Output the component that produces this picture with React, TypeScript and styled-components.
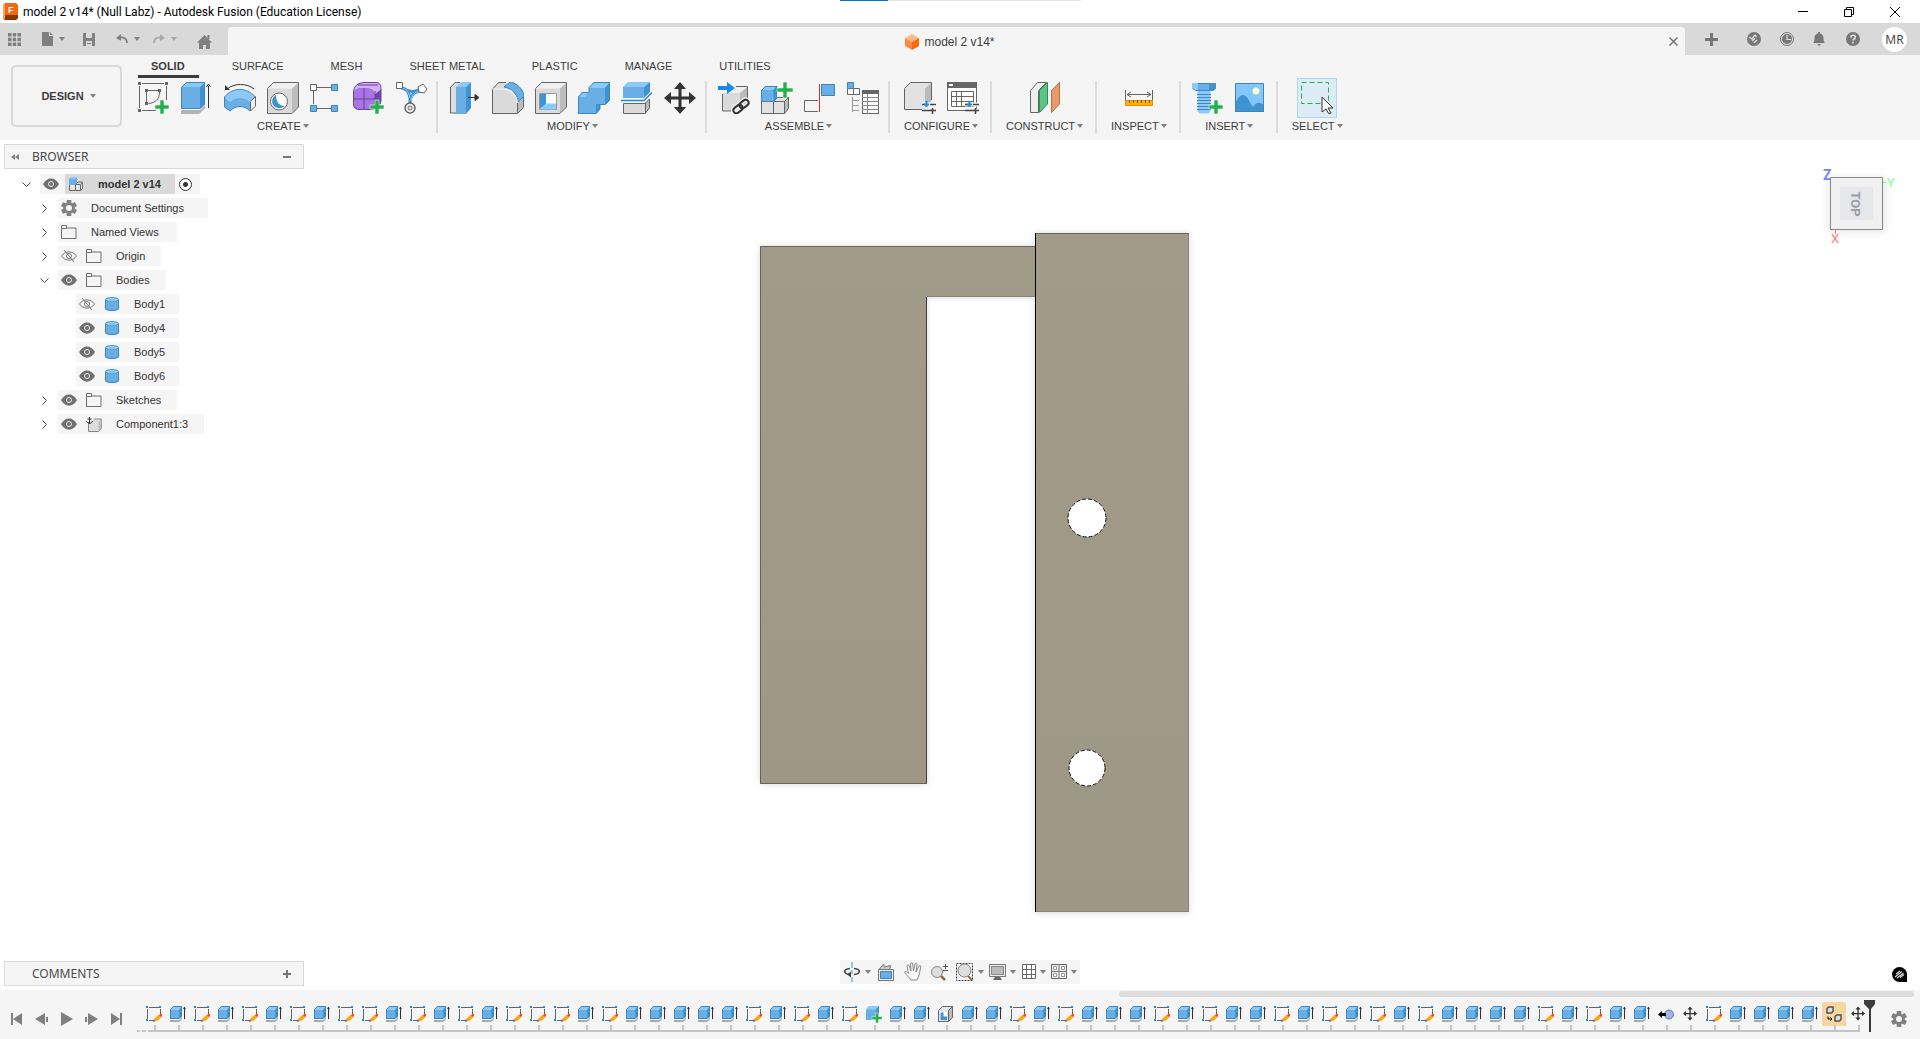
import React from "react";
import styled, { createGlobalStyle } from "styled-components";

const GlobalStyle = createGlobalStyle`
  * { box-sizing: border-box; }
  body { margin: 0; background: #fff; color: #3c3c3c; font: 11px/16px "Liberation Sans", Arial, sans-serif; overflow: hidden; }
  button { font: inherit; color: inherit; background: none; border: 0; padding: 0; margin: 0; }
  svg { display: block; flex: none; }
  ul { list-style: none; margin: 0; padding: 0; }
`;

const uiFont = `"Noto Sans", "Open Sans", sans-serif`;

/* ---------- shell ---------- */

const Shell = styled.div`
  min-height: 100vh;
  display: flex;
  flex-direction: column;
`;

const TitleBar = styled.header`
  height: 23px;
  display: flex;
  align-items: center;
  padding: 0 2px 0 3px;
  background: #fff;
  color: #000;
  position: relative;
`;

const WindowTitle = styled.h1`
  margin: 0 auto 0 5px;
  font: 400 12px/20px Roboto, sans-serif;
`;

const LoadStrip = styled.div`
  position: absolute;
  top: 0;
  left: 50%;
  width: 241px;
  height: 1px;
  margin-left: -120px;
  background: linear-gradient(to right, #0078d7 48px, #e5e5e5 48px);
`;

const WindowButton = styled.button`
  width: 46px;
  height: 20px;
  display: grid;
  place-items: center;
`;

const AppBar = styled.div`
  height: 32px;
  display: flex;
  background: #d9d9d9;
  color: #808080;
`;

const QuickAccess = styled.div`
  width: 228px;
  display: flex;
  align-items: center;
  padding-left: 8px;
`;

const ToolButton = styled.button<{ $w: number; $dim?: boolean }>`
  width: ${(p) => p.$w}px;
  height: 32px;
  display: flex;
  align-items: center;
  gap: 6px;
  color: ${(p) => (p.$dim ? "#a8a8a8" : "#808080")};
`;

const DocumentTab = styled.div`
  flex: 1;
  margin-top: 4px;
  display: flex;
  align-items: center;
  padding: 1px 5px 0 6px;
  background: #f5f5f5;
  border-radius: 4px 4px 0 0;
`;

const DocumentName = styled.div`
  flex: 1;
  display: flex;
  justify-content: center;
  align-items: center;
  gap: 5px;
  font-size: 12px;
  color: #3c3c3c;
`;

const AppActions = styled.div`
  width: 235px;
  display: flex;
  align-items: center;
  padding: 0 13px 0 19px;
`;

const ActionButton = styled.button<{ $gap: number }>`
  width: 14px;
  height: 24px;
  display: grid;
  place-items: center;
  margin-right: ${(p) => p.$gap}px;
`;

const Avatar = styled.button`
  width: 25px;
  height: 25px;
  margin-left: auto;
  border-radius: 50%;
  background: #fff;
  color: #4a4a4a;
  font: 400 12px/25px ${uiFont};
`;

/* ---------- ribbon ---------- */

const Ribbon = styled.section`
  height: 85px;
  display: flex;
  background: #f5f5f5;
`;

const WorkspaceButton = styled.button`
  width: 111px;
  height: 62px;
  margin: 10px 16px 0 11px;
  padding-left: 4px;
  display: flex;
  align-items: center;
  justify-content: center;
  gap: 6px;
  border: 2px solid #d9d9d9;
  border-radius: 5px;
  font-weight: 700;
`;

const RibbonBody = styled.div`
  flex: 1;
`;

const RibbonTabs = styled.nav`
  display: flex;
  height: 26px;
  align-items: flex-start;
`;

const RibbonTab = styled.button<{ $active?: boolean }>`
  height: 23px;
  padding: 3px 14px 1px 13px;
  margin-right: 20px;
  font-weight: ${(p) => (p.$active ? 700 : 400)};
  border-bottom: 3px solid ${(p) => (p.$active ? "#3c3c3c" : "transparent")};
`;

const Groups = styled.div`
  display: flex;
`;

const Group = styled.section`
  display: flex;
  flex-direction: column;
  align-items: center;
  height: 52px;
  padding: 1px 9px 0 11px;
  border-right: 2px solid #dcdcdc;
  &:first-child { padding: 1px 8px 0 0; }
  &:last-child { border-right: 0; }
`;

const GroupTools = styled.div`
  display: flex;
  gap: 11px;
`;

const GroupTool = styled.button<{ $selected?: boolean }>`
  width: 32px;
  height: 32px;
  box-shadow: ${(p) => (p.$selected ? "0 0 0 3px #dcebf4, 0 0 0 4px #a9d8f0" : "none")};
  background: ${(p) => (p.$selected ? "#dcebf4" : "none")};
`;

const GroupLabel = styled.button`
  display: flex;
  align-items: center;
  gap: 2px;
  padding: 4px 3px 0;
`;

/* ---------- viewport ---------- */

const Viewport = styled.main`
  flex: 1;
  display: flex;
  position: relative;
  background: #fff;
`;

const Scene = styled.svg`
  position: absolute;
  inset: 0;
  width: 100%;
  height: 100%;
`;

const SidePanels = styled.aside`
  width: 300px;
  margin: 4px 0 4px 4px;
  display: flex;
  flex-direction: column;
  justify-content: space-between;
  position: relative;
`;

const PanelHeader = styled.div`
  height: 25px;
  display: flex;
  align-items: center;
  padding: 0 12px 0 6px;
  background: #f5f5f5;
  border: 1px solid #dadada;
  color: #808080;
`;

const PanelTitle = styled.h2`
  flex: 1;
  margin: 0 0 0 13px;
  color: #4a4a4a;
  font: 400 12px/20px ${uiFont};
`;

const PanelButton = styled.button`
  width: 8px;
  height: 20px;
  display: grid;
  place-items: center;
`;

const Tree = styled.ul`
  padding-top: 5px;
`;

const TreeRow = styled.li<{ $indent: number }>`
  height: 20px;
  margin-bottom: 4px;
  display: flex;
  align-items: center;
  padding-left: ${(p) => p.$indent}px;
  color: #333;
`;

const Expander = styled.button`
  width: 12px;
  height: 20px;
  margin-right: 8px;
  display: grid;
  place-items: center;
`;

const RowBody = styled.div<{ $pad: number }>`
  height: 20px;
  display: flex;
  align-items: center;
  padding-right: ${(p) => p.$pad}px;
  background: #f5f5f5;
`;

const RowIcon = styled.span<{ $w: number }>`
  width: ${(p) => p.$w}px;
  height: 20px;
  display: grid;
  place-items: center;
`;

const RowLabel = styled.button<{ $gap: number }>`
  margin-left: ${(p) => p.$gap}px;
`;

const RootName = styled.button`
  height: 20px;
  width: 110px;
  margin-left: 3px;
  display: flex;
  align-items: center;
  gap: 15px;
  padding-left: 4px;
  background: #d9d9d9;
  font-weight: 700;
`;

const ActivateRadio = styled.input`
  appearance: none;
  width: 13px;
  height: 13px;
  margin: 0 8px 0 4px;
  border: 1px solid #333;
  border-radius: 50%;
  background: radial-gradient(circle, #333 0 2px, #fff 3px);
`;

const ViewportCenter = styled.div`
  flex: 1;
  display: flex;
  flex-direction: column;
  align-items: center;
  justify-content: flex-end;
  padding-bottom: 6px;
  position: relative;
`;

const NavBar = styled.div`
  height: 24px;
  width: 240px;
  display: flex;
  align-items: center;
  justify-content: space-between;
  padding: 0 3px 1px;
  background: #f5f5f5;
`;

const NavButton = styled.button<{ $plain?: boolean }>`
  height: 22px;
  display: flex;
  align-items: center;
  gap: 4px;
  padding: 0 ${(p) => (p.$plain ? 2 : 0)}px;
`;

const ViewportRight = styled.div`
  width: 304px;
  display: flex;
  flex-direction: column;
  align-items: flex-end;
  justify-content: space-between;
  padding: 24px 13px 8px 0;
  position: relative;
`;

const CubeButton = styled.button`
  margin-right: 9px;
`;

const AssistantButton = styled.button`
  margin: 0 0 0 auto;
`;

/* ---------- timeline ---------- */

const Timeline = styled.footer`
  height: 49px;
  display: flex;
  background: #f5f5f5;
  color: #808080;
  position: relative;
`;

const ScrollThumb = styled.div`
  position: absolute;
  top: 1px;
  right: 6px;
  width: 795px;
  height: 6px;
  border-radius: 3px;
  background: #dddddd;
`;

const Playback = styled.div`
  display: flex;
  gap: 8px;
  width: 137px;
  padding: 9px 0 0 8px;
`;

const PlaybackButton = styled.button`
  width: 17px;
  height: 40px;
  display: grid;
  place-items: center;
`;

const History = styled.div`
  padding-top: 12px;
`;

const Steps = styled.div`
  display: flex;
  padding-left: 5px;
`;

const Step = styled.button<{ $selected?: boolean }>`
  width: 24px;
  height: 28px;
  padding: 4px 4px 0;
  background: linear-gradient(#c5c5c5, #c5c5c5) 12px 23px / 2px 5px no-repeat,
    linear-gradient(${(p) => (p.$selected ? "#f8d5a2, #f8d5a2" : "transparent, transparent")}) 0 0 / 24px 24px no-repeat;
  border-radius: 2px;
`;

const Rail = styled.div`
  display: flex;
  gap: 2px;
  margin-right: 10px;
`;

const RailPart = styled.span<{ $w?: number }>`
  height: 2px;
  background: #c5c5c5;
  ${(p) => (p.$w ? `width: ${p.$w}px;` : "flex: 1;")}
`;

const Marker = styled.div`
  margin: 10px 0 0 -6px;
  position: relative;
`;

const SettingsButton = styled.button`
  margin: 9px 12px 0 auto;
  width: 18px;
  height: 40px;
  display: grid;
  place-items: center;
`;

/* ---------- shared icons ---------- */

const B = "#69afe5";
const BL = "#8bc9fb";
const BD = "#3f93d1";
const G = "#666";

const Caret = () => (
  <svg width="6" height="4" viewBox="0 0 6 4"><path d="M0 0h6L3 4z" fill="#808080" /></svg>
);

const Plus = ({ x, y }: { x: number; y: number }) => (
  <path d={`M${x + 5} ${y}h4v5h5v4h-5v5h-4v-5h-5v-4h5z`} fill="#23b14d" stroke="#f5f5f5" strokeWidth=".6" />
);

const moveShape = (
  <path d="M16 0l6 7h-4.500v7.500H25V10l7 6-7 6v-4.500h-7.500V25H22l-6 7-6-7h4.500v-7.500H7V22l-7-6 7-6v4.500h7.500V7H10z" fill="#333" />
);

const Cube = () => (
  <>
    <path d="M.5 6.500L6 .5h25L25 6.500z" fill="#f0f0f0" />
    <path d="M.5 6.500H25v25H.5z" fill="#dadada" />
    <path d="M25 6.500l6.500-6V25L25 31.500z" fill="#bdbdbd" />
    <path d="M.5 6.500L6.500.5h25V25L25 31.500H.5z" fill="none" stroke={G} />
  </>
);

const ribbonArt: Record<string, React.ReactNode> = {
  sketch: (
    <>
      <path d="M1.500 4v22M4 1.500h22M28.500 4v14M4 28.500h14" stroke={G} fill="none" />
      <path d="M0 0h3v3H0zM27 0h3v3h-3zM0 27h3v3H0zM7 7h3v3H7zM20 7h3v3h-3zM7 20h3v3H7z" fill={G} />
      <path d="M8.500 10v10M10 8.500h10M21.500 10c0 7-4 11-11 11.500" stroke={G} fill="none" />
      <Plus x={17} y={18} />
    </>
  ),
  extrude: (
    <>
      <path d="M0 28h19l5-5v3l-6 6H0z" fill="#b3b3b3" />
      <path d="M0 5L5 0h19l-5 5z" fill={BL} /><path d="M0 5h19v22H0z" fill={B} /><path d="M19 5l5-5v22l-5 5z" fill={BD} />
      <path d="M.5 5.500L5.500.5h18V22L19 26.500H.5z" fill="none" stroke="#3b86bd" />
      <path d="M27.500 4v22M25.500 5l2-3 2 3" stroke="#333" fill="none" />
    </>
  ),
  revolve: (
    <>
      <path d="M3 7c7-6 20-6 27 0" stroke="#333" fill="none" /><path d="M1 3v5h5z" fill="#333" />
      <path d="M.5 15C9 5 22 5 31.500 15L26 20c-6-6-14-6-20 0z" fill={BL} />
      <path d="M.5 15L6 20v9L.5 25zM6 20c6-6 14-6 20 0v9c-6-6-14-6-20 0z" fill={B} />
      <path d="M.5 15C9 5 22 5 31 14.500M.5 15v10L6 29c6-6 14-6 20 0" stroke="#3b86bd" fill="none" />
      <path d="M26.500 19.500l5-5V24l-5 5z" fill="#f5f5f5" stroke={G} />
    </>
  ),
  hole: (
    <>
      <Cube /><circle cx="12" cy="19.500" r="8.500" fill="#fff" stroke={G} />
      <path d="M9 13c-4 2-5 7-2.500 10.500 3 3.500 8 3.500 11 .5-5 0-8.500-4-8.500-11z" fill={BD} />
    </>
  ),
  pattern: (
    <>
      <path d="M7 5.500h15M3.500 9v13M7 26.500h15" stroke={G} />
      <path d="M.5 2.500h6v6h-6z" fill="#fff" stroke={G} />
      <path d="M21.500 2.500h6v6h-6zM.5 23.500h6v6h-6zM21.500 23.500h6v6h-6z" fill={B} stroke="#3b86bd" />
    </>
  ),
  form: (
    <>
      <rect x="0" y="6" width="22" height="22" rx="6" fill="#a974e6" /><path d="M22 26c3-1 6-4 6-8V7l-6 5z" fill="#7544ad" />
      <path d="M1 9C2 3 7 0 12 0h11c4 0 5 3 5 7l-6 5c0-4-2-6-6-6H6C3 6 1 8 1 9z" fill="#d4aef7" />
      <path d="M.5 12C0 4 5 .5 12 .5h11c3 0 5 2 5 5V18c0 5-4 9-10 9.500H7c-4 0-6.500-2-6.500-6zM11 6v22M0 17h22M5 3h20M22 9v17" fill="none" stroke="#68409a" />
      <Plus x={17} y={18} />
    </>
  ),
  pipe: (
    <>
      <path d="M5 6c5 0 8 4 9 10v6M26 9c-7 0-10 3-12 9M8 7c5 3 10 3 15 1" stroke={BD} strokeWidth="3" fill="none" />
      <path d="M5 6c5 0 8 4 9 10M26 9c-7 0-9 3-11 9" stroke={BL} fill="none" />
      <circle cx="14" cy="26" r="5" fill="#eee" stroke={G} strokeWidth="1.500" /><circle cx="14" cy="26" r="2" fill="none" stroke={G} />
      <path d="M.5.5h6v6h-6zM22 5l5-3 4 5-3 4-5-1z" fill="#fff" stroke={G} />
    </>
  ),
  press: (
    <>
      <path d="M1 5l5-5h4v31H1z" fill="#ddd" /><path d="M1.500 5.500L6 .5h5M1.500 5v26H7" fill="none" stroke={G} />
      <path d="M7 5l5-5h10l-5 5z" fill={BL} /><path d="M7 5h10v27H7z" fill={B} /><path d="M17 5l5-5v26l-5 6z" fill={BD} />
      <path d="M19 15.500h10M26 12.500l4 3-4 3z" stroke="#333" fill="#333" />
    </>
  ),
  fillet: (
    <>
      <path d="M.5 7l6-6.500H14L25 19v12.500H.5z" fill="#dadada" /><path d="M25 20l6.500-5v10L25 31.500z" fill="#bbb" />
      <path d="M.5 31.500V7l6-6.500H14M25.500 19v12.500H.500M25.500 31.500l6-6V15" fill="none" stroke={G} />
      <path d="M12 5l6-5c7 1 13 7 14 14l-6 6c-1-8-6-14-14-15z" fill={B} stroke="#3b86bd" />
      <path d="M.5 7h9c9 0 16 7 16 14" fill="none" stroke="#f5f5f5" />
    </>
  ),
  shell: (
    <>
      <Cube /><path d="M4.500 11.500h17v16h-17z" fill="#fff" stroke="#999" /><path d="M5 12h6v10l-6 5z" fill={BD} /><path d="M5 27.500l6-6h10v6z" fill={BL} />
    </>
  ),
  combine: (
    <>
      <path d="M0 15l4-5h7V6l5-6h16v18l-5 5h-5v4l-4 5H0z" fill={B} />
      <path d="M11 6l5-6h16l-5 6zM0 15l4-5h7l-4 5z" fill={BL} /><path d="M27 6l5-6v18l-5 5h-5v4l-4 5V22h9z" fill={BD} />
      <path d="M.5 15l4-4.500H11V5.500L16 .5h15.500V18L27 22.500h-5V27l-4 4.500H.5z" fill="none" stroke="#3b86bd" />
    </>
  ),
  split: (
    <>
      <path d="M2 5l5-5h22l-6 5z" fill={BL} /><path d="M2 5h21v11H2z" fill={B} /><path d="M23 5l6-5v10l-6 6z" fill={BD} />
      <path d="M0 18.500h23l8-8" stroke="#1a8ae5" fill="none" strokeWidth="1.500" />
      <path d="M2.500 21.500h22v10h-22z" fill="#dadada" stroke={G} /><path d="M24.500 21l4-4v9l-4 5z" fill="#bbb" stroke={G} />
    </>
  ),
  move: moveShape,
  insertComp: (
    <>
      <path d="M5 11l6-6h18l-7 6z" fill="#eee" /><path d="M5 11h17v18H5z" fill="#dadada" /><path d="M22 11l7-6v17l-7 7z" fill="#bbb" />
      <path d="M4.500 12v17H18M18 4.500h11.500V18" fill="none" stroke={G} />
      <path d="M0 4h9V0l8 6-8 6V8H0z" fill="#1a8ae5" />
      <g fill="none" stroke="#f5f5f5" strokeWidth="5"><rect x="15" y="24" width="10" height="6" rx="3" transform="rotate(-38 20 27)" /><rect x="21" y="19" width="10" height="6" rx="3" transform="rotate(-38 26 22)" /></g>
      <g fill="none" stroke="#333" strokeWidth="2"><rect x="15" y="24" width="10" height="6" rx="3" transform="rotate(-38 20 27)" /><rect x="21" y="19" width="10" height="6" rx="3" transform="rotate(-38 26 22)" /></g>
    </>
  ),
  newComp: (
    <>
      <path d="M.5 19.500h12v12H.5zM12.500 19.500h11v12h-11zM12.500 19.500l4-4h11l-4 4z" fill="#e2e2e2" stroke={G} /><path d="M23.500 19.500l4-4v11l-4 5z" fill="#bbb" stroke={G} />
      <path d="M0 8l4-4h13l-3 4z" fill={BL} /><path d="M0 8h13v12H0z" fill={B} /><path d="M12 8l4-4v11l-3 5z" fill={BD} />
      <path d="M.5 8.500l4-4h11V16l-3 3.500H.5z" fill="none" stroke="#3b86bd" />
      <path d="M22 0h4v6h6v4h-6v6h-4v-6h-6V6h6z" fill="#23b14d" stroke="#f5f5f5" strokeWidth=".6" />
    </>
  ),
  joint: (
    <><path d="M14 18.500H.5v11H14" stroke={G} fill="#f5f5f5" /><path d="M15.500 2v28" stroke="#d32f2f" /><path d="M17.500 2.500h13v11h-13z" fill={B} stroke="#3b86bd" /></>
  ),
  table: (
    <>
      <path d="M.5 6.500h6v6h-6zM6.500 6.500h6v6h-6z" fill="#fff" stroke={G} /><path d="M.5.5h6v6h-6z" fill={B} stroke="#3b86bd" />
      <path d="M5.500 15v15M6 18.500h6M6 23.500h6M6 28.500h6" stroke="#999" />
      <path d="M15.500 8.500h16v23h-16z" fill="#fff" stroke={G} /><path d="M15 8h17v4H15z" fill={G} />
      <path d="M20.500 12v20M15 15.500h17M15 19.500h17M15 23.500h17M15 27.500h17" stroke="#888" />
    </>
  ),
  config: (
    <>
      <path d="M.5 6.500l6-6h21v21l-6 6H.5z" fill="#e2e2e2" /><path d="M21 6.500l6.500-6V19L21 25z" fill="#bbb" />
      <path d="M18 27.500H.500v-21l6-6h21V18" stroke={G} fill="none" />
      <path d="M18 22.500h14M18 28.500h14" stroke="#f5f5f5" strokeWidth="4" />
      <path d="M18 22.500h5M26 22.500h6M18 28.500h14M28.500 26v6" stroke="#444" strokeWidth="1.500" /><path d="M22.500 19v6M20 22.500h5" stroke="#1a8ae5" strokeWidth="2" />
    </>
  ),
  configTable: (
    <>
      <path d="M.5.5h29v28H.5z" fill="#fff" stroke={G} /><path d="M0 0h30v6H0z" fill={G} /><path d="M2 2h4v2H2z" fill="#fff" />
      <path d="M4.500 9.500h22v15h-22zM9.500 9.500v15M14.500 9.500v15M4.500 14.500h22M4.500 19.500h22" fill="none" stroke={G} />
      <path d="M18 22.500h14M18 28.500h14" stroke="#f5f5f5" strokeWidth="4" />
      <path d="M18 22.500h5M26 22.500h6M18 28.500h14M28.500 26v6" stroke="#444" strokeWidth="1.500" /><path d="M22.500 19v6M20 22.500h5" stroke="#1a8ae5" strokeWidth="2" />
    </>
  ),
  plane: (
    <>
      <path d="M1.500 8.500l7-8h9l-8 8v22h-8z" fill="#eee" stroke={G} />
      <path d="M10.500 8.500l8-8V22l-8 8.500z" fill="#5cc583" stroke="#2f8f55" /><path d="M22.500 8.500l8-8V22l-8 8.500z" fill="#e79a6a" stroke="#b86f42" />
    </>
  ),
  measure: (
    <>
      <path d="M2.500 8v14M29.500 8v14M4 12.500h24M8 10l-4 2.500L8 15M24 10l4 2.500-4 2.500" stroke={G} fill="none" />
      <path d="M2.500 18.500h27v5h-27z" fill="#ffae0d" stroke="#e09500" /><path d="M6.500 18v3M10.500 18v3M14.500 18v3M18.500 18v3M22.500 18v3M26.500 18v3" stroke="#7a5300" />
    </>
  ),
  bolt: (
    <>
      <path d="M.5 1.500h23v5l-3 2H4l-3.500-2z" fill={B} stroke="#3b86bd" /><path d="M17 1h7v5l-3 3h-4z" fill={BD} /><path d="M0 1h6v7H3L0 6z" fill={BL} />
      <path d="M5.500 9h13v20l-2 2.500h-9l-2-2.500z" fill={BL} /><path d="M5 12.500h14M5 15.500h14M5 18.500h14M5 21.500h14M5 24.500h14M5 27.500h14" stroke="#3b86bd" />
      <Plus x={17} y={18} />
    </>
  ),
  image: (
    <><path d="M0 1h29v29H0z" fill="#82c7fb" /><circle cx="21" cy="9" r="3.500" fill="#fff9cf" /><path d="M0 21c3-5 5-8 8-8 5 0 7 9 10 12 3-4 5-6 11-2v7H0z" fill={BD} /><path d="M.5 1.500h28v28H.5z" fill="none" stroke="#3b86bd" /></>
  ),
  select: (
    <>
      <path d="M.5.500h27v21H.500z" fill="none" stroke="#23b14d" strokeDasharray="5 3" />
      <path d="M21 15v15l4-3 3 5 2-1-3-5h5z" fill="#fff" stroke="#333" />
    </>
  ),
};

const groups: { name: string; tools: [string, string][] }[] = [
  { name: "CREATE", tools: [["sketch", "Create Sketch"], ["extrude", "Extrude"], ["revolve", "Revolve"], ["hole", "Hole"], ["pattern", "Rectangular Pattern"], ["form", "Create Form"], ["pipe", "Automated Modeling"]] },
  { name: "MODIFY", tools: [["press", "Press Pull"], ["fillet", "Fillet"], ["shell", "Shell"], ["combine", "Combine"], ["split", "Split Body"], ["move", "Move/Copy"]] },
  { name: "ASSEMBLE", tools: [["insertComp", "Insert Component"], ["newComp", "New Component"], ["joint", "Joint"], ["table", "Bill of Materials"]] },
  { name: "CONFIGURE", tools: [["config", "Create Configuration"], ["configTable", "Configuration Table"]] },
  { name: "CONSTRUCT", tools: [["plane", "Offset Plane"]] },
  { name: "INSPECT", tools: [["measure", "Measure"]] },
  { name: "INSERT", tools: [["bolt", "Insert Fastener"], ["image", "Canvas"]] },
  { name: "SELECT", tools: [["select", "Select"]] },
];

const ribbonTabs = ["SOLID", "SURFACE", "MESH", "SHEET METAL", "PLASTIC", "MANAGE", "UTILITIES"];

/* ---------- tree icons ---------- */

const Eye = ({ off }: { off?: boolean }) => (
  <svg width="16" height="12" viewBox="0 0 16 12">
    {off ? (
      <g fill="none" stroke="#777"><path d="M.5 6C4 .5 12 .5 15.500 6 12 11.500 4 11.500.5 6z" /><circle cx="8" cy="6" r="2.500" /><path d="M3 0l10 12" /></g>
    ) : (
      <><path d="M0 6C4-1.500 12-1.500 16 6 12 13.500 4 13.500 0 6z" fill="#707070" /><circle cx="8" cy="6" r="2.500" fill="none" stroke="#eee" /></>
    )}
  </svg>
);

const Folder = () => (
  <svg width="16" height="14" viewBox="0 0 16 14"><path d="M.5.500h5v3h-5zM.5 3.500v10h14.500v-10.500H6" fill="none" stroke="#707070" /></svg>
);

const Cylinder = () => (
  <svg width="14" height="14" viewBox="0 0 14 14">
    <path d="M0 2.500v9c0 3.300 14 3.300 14 0v-9z" fill={B} /><path d="M.5 2.500v9c0 2.600 13 2.600 13 0v-9" fill="none" stroke="#3b86bd" /><ellipse cx="7" cy="2.500" rx="6.500" ry="2" fill={BL} stroke="#5a9fd0" />
  </svg>
);

const Gear = () => (
  <svg width="16" height="16" viewBox="0 0 16 16">
    <g fill="#808080"><circle cx="8" cy="8" r="5.800" />{[0, 60, 120].map((a) => <rect key={a} x="5.700" y="0" width="4.600" height="16" rx=".6" transform={`rotate(${a} 8 8)`} />)}</g>
    <circle cx="8" cy="8" r="3" fill="#f5f5f5" />
  </svg>
);

const Component = () => (
  <svg width="16" height="16" viewBox="0 0 16 16">
    <path d="M2.500 6v9.500h10l3-3V3H8" fill="#ddd" stroke="#888" /><path d="M12.500 15.500V6l3-3v9.500z" fill="#bbb" />
    <path d="M3.500 1v7M1.500 3h4M.5 5c.5 3 5.500 3 6 0" fill="none" stroke="#333" />
  </svg>
);

const Chevron = ({ open }: { open?: boolean }) => (
  <svg width="9" height="9" viewBox="0 0 9 9"><path d={open ? "M.5 2.500l4 4 4-4" : "M2.500.500l4 4-4 4"} fill="none" stroke="#444" /></svg>
);

type Node = { name: string; icon: React.ReactNode; eye?: "on" | "off"; open?: boolean; leaf?: boolean; pad?: number };

const nodes: Node[] = [
  { name: "Document Settings", icon: <Gear />, pad: 24 },
  { name: "Named Views", icon: <Folder />, pad: 18 },
  { name: "Origin", icon: <Folder />, eye: "off" },
  { name: "Bodies", icon: <Folder />, eye: "on", open: true },
  { name: "Body1", icon: <Cylinder />, eye: "off", leaf: true, pad: 14 },
  { name: "Body4", icon: <Cylinder />, eye: "on", leaf: true, pad: 14 },
  { name: "Body5", icon: <Cylinder />, eye: "on", leaf: true, pad: 14 },
  { name: "Body6", icon: <Cylinder />, eye: "on", leaf: true, pad: 14 },
  { name: "Sketches", icon: <Folder />, eye: "on" },
  { name: "Component1:3", icon: <Component />, eye: "on" },
];

/* ---------- timeline icons ---------- */

const smallBody = (
  <>
    <path d="M0 3.500L3.500 0H12L9 3.500z" fill={BL} /><path d="M0 3.500h9V13H0z" fill={B} /><path d="M9 3.500L12 0v10l-3 3z" fill={BD} />
    <path d="M.5 3.500L3.500.500h8V10L9 12.500H.500z" fill="none" stroke="#3b86bd" />
  </>
);

const stepArt: Record<string, React.ReactNode> = {
  S: (
    <>
      <path d="M1.500 3v10M3 1.500h10M14.500 3v5M3 14.500h5" stroke={G} /><path d="M0 0h2v2H0zM13 0h2v2h-2zM0 13h2v2H0z" fill="#1a8ae5" />
      <path d="M8.500 13l4.500-4 2 2-4.500 4z" fill="#ffa60d" stroke="#ffa60d" /><path d="M13 9l2-1.500 1.500 1L15.500 11z" fill="#f44336" /><path d="M7 16l1-3 2 2z" fill="#777" />
    </>
  ),
  E: (
    <>
      <path d="M0 14h9l3-3v2l-3 3H0z" fill="#aaa" />{smallBody}<path d="M14.500 2v11" stroke="#333" /><path d="M13 3l1.500-2.500L16 3z" fill="#333" />
    </>
  ),
  N: (<><path d="M0 3.500L3 0h10v10l-3 4H0z" fill={B} /><path d="M0 3.500L3 0h10l-3 3.500z" fill={BL} /><path d="M10 3.500L13 0v10l-3 4z" fill={BD} /><path d="M9.500 7h3v3.500H16v3h-3.500V17h-3v-3.500H6v-3h3.500z" fill="#23b14d" stroke="#f5f5f5" strokeWidth=".5" /></>),
  H: (<><path d="M.5 4.500l4-4h10v11l-4 4H.500z" fill="#e6e6e6" stroke={G} /><path d="M10.500 4.500l4-4v11l-4 4z" fill="#bbb" stroke={G} /><path d="M2 6h7v8H2z" fill="#fff" /><path d="M2.500 6.500h3v4H9V14H2.500z" fill={BD} /></>),
  J: (<><circle cx="11" cy="8.500" r="4.500" fill="#9fb6e3" stroke="#6277a8" /><path d="M0 8.500L4 5v2h4v3H4v2z" fill="#000" /></>),
  M: <g transform="translate(1 .5) scale(.44)">{moveShape}</g>,
  C: (
    <g stroke="#555" fill="#ddd"><path d="M1 2.500L2.500 1H7v4.500L5.500 7H1zM9 10.500L10.500 9H15v4.500L13.500 15H9z" strokeWidth="1.500" /><path d="M2 10.500v2.500h4M4.500 11.500L6 13l-1.500 1.500" fill="none" stroke="#000" /></g>
  ),
};

const stepNames: Record<string, string> = { S: "Sketch", E: "Extrude", N: "Base Feature", H: "Shell", J: "Joint Origin", M: "Move", C: "Copy" };

const history =
  "SESESESESSESESE" + "SSSESEEEEESESESNEEHEESESE" + "EESESEESESESESEEEE" + "SESEEJMSEEEECM";

/* ---------- scene ---------- */

const SceneDrawing = () => (
  <Scene viewBox="0 140 1920 850" preserveAspectRatio="xMidYMid meet" aria-label="Model view, top">
    <defs>
      <filter id="soft" x="-10%" y="-10%" width="120%" height="120%"><feGaussianBlur stdDeviation="3" /></filter>
      <linearGradient id="body" x1="0" y1="0" x2="0" y2="1"><stop offset="0" stopColor="#a29b8a" /><stop offset="1" stopColor="#9e9786" /></linearGradient>
    </defs>
    <path d="M760 246h275v-13h154v680h-154V297H927v487H760z" fill="#9aa0a8" opacity=".4" filter="url(#soft)" />
    <path d="M760 246h275v51H927v487H760z" fill="url(#body)" />
    <path d="M760.500 784V246.500H1035" fill="none" stroke="#67635a" />
    <path d="M927 296.500h108" stroke="#8b8474" /><path d="M926.500 297v487" stroke="#3f3d38" /><path d="M760 783.500h167" stroke="#67635a" />
    <path d="M1035 233h154v679h-154z" fill="url(#body)" />
    <path d="M1035 233.500h154" stroke="#67635a" /><path d="M1188.500 234v678M1036 911.500h153" stroke="#8b8474" /><path d="M1035.500 233v679" stroke="#000" />
    <circle cx="1087" cy="518" r="19" fill="#fff" stroke="#111" strokeDasharray="4 2" /><circle cx="1087" cy="768" r="18" fill="#fff" stroke="#111" strokeDasharray="4 2" />
  </Scene>
);

export default function App() {
  return (
    <Shell>
      <GlobalStyle />
      <TitleBar>
        <svg width="15" height="17" viewBox="0 0 15 17">
          <path d="M2 0h11l2 2v13l-2 2H2l-2-2V2z" fill="#f2690d" /><path d="M0 12h15v3l-2 2H2l-2-2z" fill="#8c3300" /><path d="M0 2l2-2v16l-2-1z" fill="#ffa15c" />
          <text x="5" y="10" fontSize="9" fontWeight="700" fill="#fff" fontFamily="Liberation Sans, sans-serif">F</text>
        </svg>
        <WindowTitle>model 2 v14* (Null Labz) - Autodesk Fusion (Education License)</WindowTitle>
        <LoadStrip />
        <WindowButton aria-label="Minimize"><svg width="10" height="10"><path d="M0 4.500h10" stroke="#000" /></svg></WindowButton>
        <WindowButton aria-label="Restore"><svg width="10" height="10"><path d="M.5 2.500h7v7h-7zM2.500 2.500v-2h7v7h-2" fill="none" stroke="#000" /></svg></WindowButton>
        <WindowButton aria-label="Close"><svg width="10" height="10"><path d="M0 0l10 10M10 0L0 10" stroke="#000" /></svg></WindowButton>
      </TitleBar>

      <AppBar>
        <QuickAccess>
          <ToolButton $w={34} aria-label="Data panel"><svg width="13" height="13" viewBox="0 0 13 13"><path d="M0 0h3.500v3.500H0zM4.700 0h3.500v3.500H4.700zM9.500 0H13v3.500H9.500zM0 4.700h3.500v3.500H0zM4.700 4.700h3.500v3.500H4.700zM9.500 4.700H13v3.500H9.500zM0 9.500h3.500V13H0zM4.700 9.500h3.500V13H4.700zM9.500 9.500H13V13H9.500z" fill="currentColor" /></svg></ToolButton>
          <ToolButton $w={41} aria-label="File"><svg width="11" height="14" viewBox="0 0 11 14"><path d="M0 0h7v4h4v10H0zM8 0l3 3H8z" fill="currentColor" /></svg><Caret /></ToolButton>
          <ToolButton $w={33} aria-label="Save"><svg width="12" height="13" viewBox="0 0 12 13"><path fillRule="evenodd" d="M0 0h12v13H0zM3 0v5h6V0zM3 8v5h6V8zM4 10h4v1H4z" fill="currentColor" /></svg></ToolButton>
          <ToolButton $w={37} aria-label="Undo"><svg width="12" height="10" viewBox="0 0 12 10"><path d="M2 4c5-1.500 9 0 9 5" fill="none" stroke="currentColor" strokeWidth="1.800" /><path d="M0 4l5-4v7z" fill="currentColor" /></svg><Caret /></ToolButton>
          <ToolButton $w={44} $dim aria-label="Redo"><svg width="12" height="10" viewBox="0 0 12 10"><path d="M10 4C5 2.500 1 4 1 9" fill="none" stroke="currentColor" strokeWidth="1.800" /><path d="M12 4L7 0v7z" fill="currentColor" /></svg><svg width="6" height="4"><path d="M0 0h6L3 4z" fill="currentColor" /></svg></ToolButton>
          <ToolButton $w={15} aria-label="Home"><svg width="15" height="20" viewBox="0 0 15 20"><path d="M7.500 6L0 13.500h2V20h4v-4h3v4h4v-6.500h2zM10.500 6h2v4h-2z" fill="currentColor" /></svg></ToolButton>
        </QuickAccess>
        <DocumentTab>
          <DocumentName>
            <svg width="14" height="16" viewBox="0 0 14 16"><path d="M7 0l7 4-7 4-7-4z" fill="#ffb98a" /><path d="M0 4l7 4v8l-7-4z" fill="#ff8b42" /><path d="M14 4L7 8v8l7-4z" fill="#f96a0a" /></svg>
            model 2 v14*
          </DocumentName>
          <ActionButton $gap={0} aria-label="Close document"><svg width="9" height="9"><path d="M.5.500l8 8M8.500.500l-8 8" stroke="#777" strokeWidth="1.500" /></svg></ActionButton>
        </DocumentTab>
        <AppActions>
          <ActionButton $gap={29} aria-label="New tab"><svg width="13" height="13"><path d="M5 0h3v5h5v3H8v5H5V8H0V5h5z" fill="#777" /></svg></ActionButton>
          <ActionButton $gap={19} aria-label="Extensions"><svg width="14" height="14" viewBox="0 0 14 14"><circle cx="7" cy="7" r="7" fill="#777" /><path d="M2 5l3 2 3-4M5 9l3-2.500M7 11l3-3M8 3l1.500 2" stroke="#d9d9d9" strokeWidth="1.500" fill="none" /></svg></ActionButton>
          <ActionButton $gap={18} aria-label="Job status"><svg width="14" height="14" viewBox="0 0 14 14"><circle cx="7" cy="7" r="6.500" fill="none" stroke="#777" /><circle cx="7" cy="7" r="5" fill="#777" /><path d="M7 3v4.500h4" fill="none" stroke="#e5e5e5" strokeWidth="1.200" /></svg></ActionButton>
          <ActionButton $gap={20} aria-label="Notifications"><svg width="12" height="14" viewBox="0 0 12 14"><path d="M5 0h2v1.500c3 .5 3.500 3 3.500 5S11 10 12 11H0c1-1 1.500-2.500 1.500-4.500s.5-4.500 3.500-5zM4 12h4l-2 2z" fill="#777" /></svg></ActionButton>
          <ActionButton $gap={0} aria-label="Help"><svg width="14" height="14" viewBox="0 0 14 14"><circle cx="7" cy="7" r="7" fill="#777" /><path d="M4.800 5.500c0-3 4.500-2.800 4.500-.2C9.300 7 7 7 7 8.500M7 9.800v1.700" fill="none" stroke="#e5e5e5" strokeWidth="1.600" /></svg></ActionButton>
          <Avatar>MR</Avatar>
        </AppActions>
      </AppBar>

      <Ribbon>
        <WorkspaceButton>DESIGN <Caret /></WorkspaceButton>
        <RibbonBody>
          <RibbonTabs>
            {ribbonTabs.map((t, i) => <RibbonTab key={t} $active={i === 0}>{t}</RibbonTab>)}
          </RibbonTabs>
          <Groups>
            {groups.map((g) => (
              <Group key={g.name}>
                <GroupTools>
                  {g.tools.map(([id, label]) => (
                    <GroupTool key={id} $selected={id === "select"} aria-label={label}>
                      <svg width="32" height="32" viewBox="0 0 32 32">{ribbonArt[id]}</svg>
                    </GroupTool>
                  ))}
                </GroupTools>
                <GroupLabel>{g.name}<Caret /></GroupLabel>
              </Group>
            ))}
          </Groups>
        </RibbonBody>
      </Ribbon>

      <Viewport>
        <SceneDrawing />
        <SidePanels>
          <section>
            <PanelHeader>
              <PanelButton aria-label="Collapse"><svg width="8" height="6"><path d="M4 0v6L0 3zM8 0v6L4 3z" fill="#808080" /></svg></PanelButton>
              <PanelTitle>BROWSER</PanelTitle>
              <PanelButton aria-label="Minimize browser"><svg width="8" height="2"><path d="M0 0h8v2H0z" fill="#777" /></svg></PanelButton>
            </PanelHeader>
            <Tree>
              <TreeRow $indent={16}>
                <Expander aria-label="Collapse model"><Chevron open /></Expander>
                <RowBody $pad={0}>
                  <RowIcon $w={22}><Eye /></RowIcon>
                  <RootName>
                    <svg width="14" height="14" viewBox="0 0 14 14"><path d="M.5 7.500h6v6h-6zM6.500 7.500h5v6h-5zM11.500 7.500l2-2v6l-2 2M7 7l2-2h4.500" fill="#e6e6e6" stroke={G} /><path d="M0 2l2-2h6v6L6 8H0z" fill={B} /><path d="M0 2l2-2h6L6 2z" fill={BL} /></svg>
                    model 2 v14
                  </RootName>
                  <RowIcon $w={25}><ActivateRadio type="radio" defaultChecked aria-label="Activate model 2 v14" /></RowIcon>
                </RowBody>
              </TreeRow>
              {nodes.map((n) => (
                <TreeRow key={n.name} $indent={n.leaf ? 72 : 34}>
                  {n.leaf ? null : <Expander aria-label={`Toggle ${n.name}`}><Chevron open={n.open} /></Expander>}
                  <RowBody $pad={n.pad ?? 16}>
                    {n.eye ? <RowIcon $w={22}><Eye off={n.eye === "off"} /></RowIcon> : null}
                    <RowIcon $w={n.eye ? 28 : 22}>{n.icon}</RowIcon>
                    <RowLabel $gap={n.eye ? 8 : 11}>{n.name}</RowLabel>
                  </RowBody>
                </TreeRow>
              ))}
            </Tree>
          </section>
          <PanelHeader>
            <PanelButton as="span" />
            <PanelTitle>COMMENTS</PanelTitle>
            <PanelButton aria-label="Add comment"><svg width="8" height="8"><path d="M3 0h2v3h3v2H5v3H3V5H0V3h3z" fill="#777" /></svg></PanelButton>
          </PanelHeader>
        </SidePanels>

        <ViewportCenter>
          <NavBar>
            <NavButton aria-label="Orbit"><svg width="18" height="20" viewBox="0 0 18 20"><path d="M9 0v6M9 8v4M9 15v5" stroke="#8bc9fb" strokeWidth="2" /><path d="M7 6.500C0 7 0 12 7 12.500M11 6.500c7 .5 7 5.500 0 6" fill="none" stroke="#444" strokeWidth="1.500" /><path d="M8 9.500v6l-4-3z" fill="#444" /></svg><Caret /></NavButton>
            <NavButton $plain aria-label="Look at"><svg width="16" height="18" viewBox="0 0 16 18"><path d="M1.500 6l4-5 1 3 6-1.500L12 6" fill="#ccc" stroke="#777" /><path d="M.5 6.500h15v11H.5z" fill="#eee" stroke="#777" /><path d="M2.500 8.500h11v7h-11z" fill={B} stroke="#3b86bd" /></svg></NavButton>
            <NavButton $plain aria-label="Pan"><svg width="18" height="19" viewBox="0 0 18 19"><path d="M7 18c-1-2-6-6-6.500-8 1-1.500 3 .5 4 1.500L3 4c.5-1.500 2-1 2.300 0L7 9 6.500 2c.5-1.800 2-1.500 2.200 0L9.500 9l1.500-7c.6-1.500 2-1 2 .5L12 10l3-6c1-1 2-.3 1.700 1C16 8 15.500 14 13 18z" fill="#f8f8f8" stroke="#888" /></svg></NavButton>
            <NavButton $plain aria-label="Zoom"><svg width="18" height="18" viewBox="0 0 18 18"><path d="M9 12l5 5" stroke="#8b6b45" strokeWidth="2.500" /><circle cx="6" cy="9" r="5.500" fill="#ddd" stroke="#888" /><path d="M12 3.500h5M14.500 1v5M12 7.500h5" stroke="#555" /></svg></NavButton>
            <NavButton aria-label="Zoom window"><svg width="18" height="18" viewBox="0 0 18 18"><path d="M.5.500h16v17H.500z" fill="none" stroke="#444" strokeDasharray="2 1" /><path d="M12 13l4 4" stroke="#8b6b45" strokeWidth="2" /><circle cx="8.500" cy="7.500" r="6.500" fill="#ddd" stroke="#888" /></svg><Caret /></NavButton>
            <NavButton aria-label="Display settings"><svg width="17" height="16" viewBox="0 0 17 16"><path d="M.5.500h16v12H.500z" fill="#eee" stroke="#777" /><path d="M2.500 2.500h12v8h-12z" fill="#bbb" stroke="#888" /><path d="M6 13h5l2 3H4z" fill="#666" /></svg><Caret /></NavButton>
            <NavButton aria-label="Grid"><svg width="14" height="16" viewBox="0 0 14 16"><path d="M.5.500h13v14H.500z" fill="#fff" stroke="#666" /><path d="M4.500 0v15M9.500 0v15M0 5.500h14M0 10.500h14" stroke="#666" /></svg><Caret /></NavButton>
            <NavButton aria-label="Viewports"><svg width="16" height="16" viewBox="0 0 16 16"><path d="M.5.500h15v14H.500z" fill="#eee" stroke="#666" /><path d="M8 0v15M0 7.500h16" stroke="#777" /><path d="M2.500 2.500h3v3h-3zM10.500 2.500h3v3h-3zM2.500 9.500h3v3h-3zM10.500 9.500h3v3h-3z" fill="#fff" stroke="#999" /></svg><Caret /></NavButton>
          </NavBar>
        </ViewportCenter>

        <ViewportRight>
          <CubeButton aria-label="View cube">
            <svg width="78" height="84" viewBox="1820 164 78 84" fontFamily="Roboto, sans-serif" fontWeight="700">
              <defs><filter id="cubeShade" x="-30%" y="-30%" width="160%" height="160%"><feGaussianBlur stdDeviation="4" /></filter></defs>
              <rect x="1829" y="178" width="56" height="54" fill="#777" opacity=".2" filter="url(#cubeShade)" />
              <text x="1823" y="180" fontSize="14" fill="#8080ff">Z</text>
              <text x="1887" y="187" fontSize="13" fontWeight="400" fill="#80ff80">Y</text><path d="M1883 182.500h3" stroke="#80ff80" />
              <text x="1831" y="243" fontSize="13" fontWeight="400" fill="#ff8080">X</text><path d="M1835.500 230v4" stroke="#ff8080" />
              <path d="M1830.500 177.500h52v52h-52z" fill="#f0f0f0" stroke="#888" />
              <path d="M1840 187h33v33h-33z" fill="#e6e7eb" />
              <text transform="translate(1851 204) rotate(90)" fontSize="13" textAnchor="middle" fill="#9c9da3">TOP</text>
            </svg>
          </CubeButton>
          <AssistantButton aria-label="Autodesk Assistant">
            <svg width="15" height="15" viewBox="0 0 15 15"><path d="M7.500 0A7.500 7.500 0 0 1 15 7.500V15H7.500a7.500 7.500 0 0 1 0-15z" fill="#000" /><path d="M3 10l7-5.500M5 11l6.500-5M8 10.500l4-3M4 7l4-3" stroke="#ddd" strokeWidth="1.100" /></svg>
          </AssistantButton>
        </ViewportRight>
      </Viewport>

      <Timeline>
        <ScrollThumb />
        <Playback>
          <PlaybackButton aria-label="Go to beginning"><svg width="11" height="12"><path d="M0 0h2v12H0zM11 0v12L2 6z" fill="#808080" /></svg></PlaybackButton>
          <PlaybackButton aria-label="Step back"><svg width="13" height="12"><path d="M10 0v12L0 6zM11 4h2v5h-2z" fill="#808080" /></svg></PlaybackButton>
          <PlaybackButton aria-label="Play"><svg width="12" height="14"><path d="M0 0l12 7-12 7z" fill="#808080" /></svg></PlaybackButton>
          <PlaybackButton aria-label="Step forward"><svg width="13" height="12"><path d="M3 0l10 6-10 6zM0 4h2v5H0z" fill="#808080" /></svg></PlaybackButton>
          <PlaybackButton aria-label="Go to end"><svg width="11" height="12"><path d="M0 0l9 6-9 6zM9 0h2v12H9z" fill="#808080" /></svg></PlaybackButton>
        </Playback>
        <History>
          <Steps>
            {history.split("").map((k, i) => (
              <Step key={i} $selected={k === "C"} aria-label={stepNames[k]}>
                <svg width="16" height="24" viewBox="0 0 16 24">{stepArt[k]}</svg>
              </Step>
            ))}
          </Steps>
          <Rail><RailPart $w={3} /><RailPart $w={4} /><RailPart /></Rail>
        </History>
        <Marker><svg width="11" height="32" viewBox="0 0 11 32"><path d="M0 0h11v4L7 9v23H5V9L0 4z" fill="#3c3c3c" /></svg></Marker>
        <SettingsButton aria-label="Timeline settings"><Gear /></SettingsButton>
      </Timeline>
    </Shell>
  );
}
